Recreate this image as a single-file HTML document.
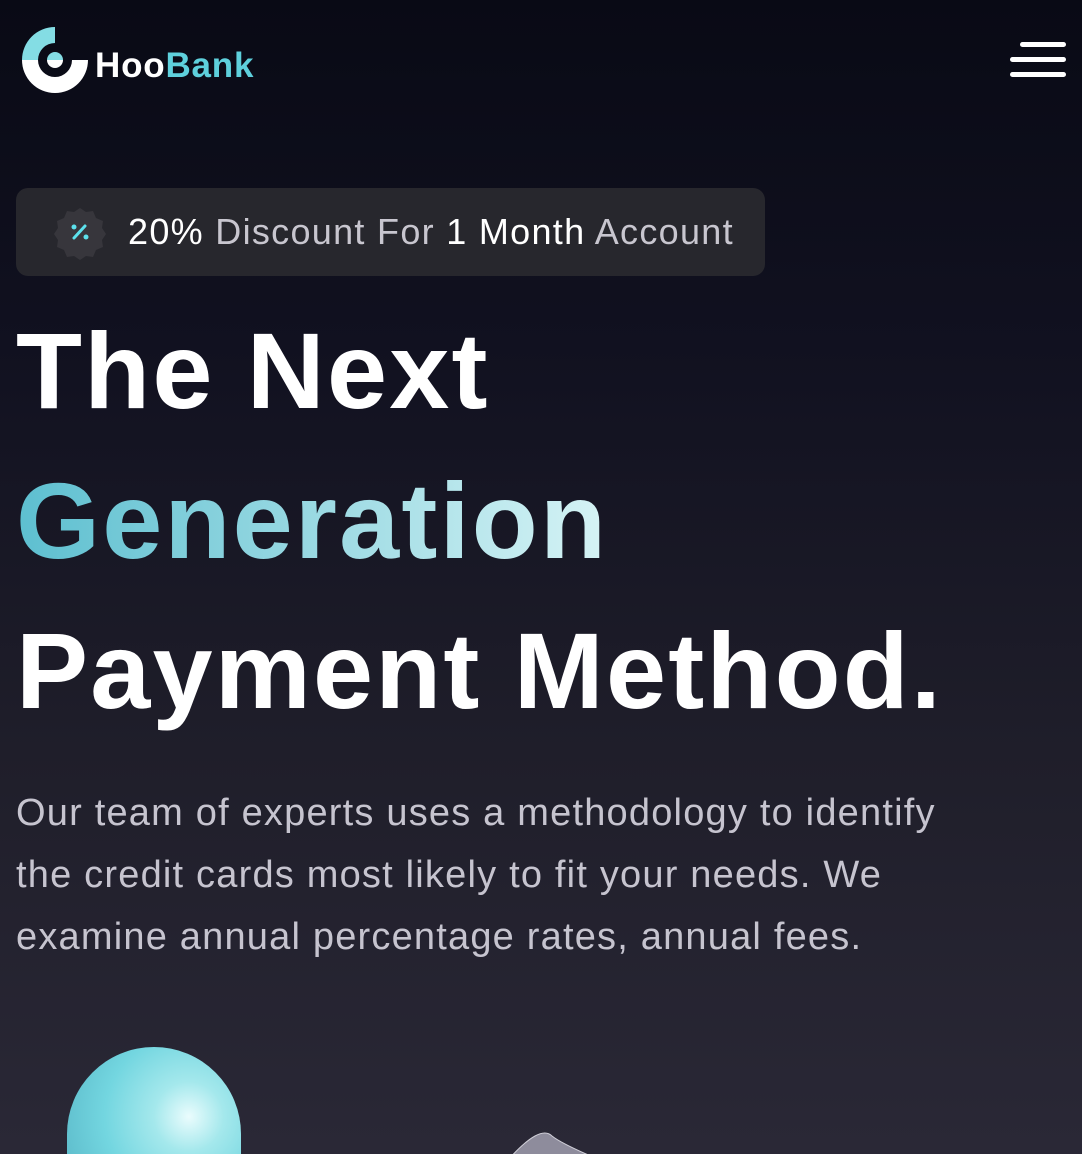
<!DOCTYPE html>
<html><head><style>
*{margin:0;padding:0;box-sizing:border-box}
html,body{width:1082px;height:1154px;overflow:hidden}
body{position:relative;font-family:"Liberation Sans",sans-serif;
background:linear-gradient(180deg,#090a15 0%,#111120 30%,#1f1e2a 65%,#2a2836 100%);}
.wrap{position:absolute;left:0;top:0;width:1082px;height:1154px;overflow:hidden}
.logo{position:absolute;left:22px;top:27px}
.brand{position:absolute;left:95px;top:46px;font-size:35px;font-weight:bold;color:#fff;letter-spacing:0.8px}
.brand span{color:#5ed0dc}
.menu{position:absolute;left:1010px;top:42px}
.menu div{height:5px;background:#fff;border-radius:3px;margin-bottom:10px}
.badge{position:absolute;left:16px;top:188px;width:749px;height:88px;background:#27272d;border-radius:12px}
.badge .t{position:absolute;left:112px;top:23px;font-size:36px;color:#fff;white-space:nowrap;letter-spacing:1.3px}
.badge .t i{font-style:normal;color:#c8c6cf}
h1{position:absolute;left:16px;font-size:108px;font-weight:bold;color:#fff;white-space:nowrap;letter-spacing:2.2px}
.g{background:linear-gradient(90deg,#5dbfd0,#d6f3f5);-webkit-background-clip:text;color:transparent}
p{position:absolute;left:16px;top:782px;width:960px;font-size:38px;line-height:62px;color:#c6c4cf;letter-spacing:1.2px}
.sphere{position:absolute;left:67px;top:1047px;width:174px;height:107px;border-radius:87px 87px 0 0;
background:radial-gradient(circle at 70% 65%,#eafcfd 0%,#a4e8ec 25%,#73d6e0 60%,#5ab8c8 100%)}
</style></head><body><div class="wrap">
<svg class="logo" width="68" height="66" viewBox="0 0 68 66">
<path d="M33 0 A33 33 0 0 0 0 33 L16 33 A17 17 0 0 1 33 16 Z" fill="#84dde4"/>
<path d="M0 33 A33 33 0 0 0 66 33 L50 33 A17 17 0 0 1 16 33 Z" fill="#fff"/>
<path d="M25 33 A8 8 0 0 1 41 33 Z" fill="#84dde4"/>
<path d="M25 33 A8 8 0 0 0 41 33 Z" fill="#fff"/>
</svg>
<div class="brand">Hoo<span>Bank</span></div>
<div class="menu"><div style="width:46px;margin-left:10px"></div><div style="width:56px"></div><div style="width:56px"></div></div>
<div class="badge">
<svg style="position:absolute;left:36px;top:16px" width="56" height="56" viewBox="0 0 56 56">
<path d="M28 4 l6 4 7-1 3 7 7 3-1 7 4 6-4 6 1 7-7 3-3 7-7-1-6 4-6-4-7 1-3-7-7-3 1-7-4-6 4-6-1-7 7-3 3-7 7 1z" fill="#37363c"/>
<circle cx="22" cy="23" r="2.5" fill="#5ce1ec"/><circle cx="34" cy="33" r="2.5" fill="#5ce1ec"/>
<line x1="22" y1="34" x2="33" y2="22" stroke="#5ce1ec" stroke-width="3" stroke-linecap="round"/>
</svg>
<div class="t">20% <i>Discount For</i> 1 Month <i>Account</i></div>
</div>
<h1 style="top:308px">The Next</h1>
<h1 style="top:458px"><span class="g">Generation</span></h1>
<h1 style="top:608px">Payment Method.</h1>
<p>Our team of experts uses a methodology to identify the credit cards most likely to fit your needs. We examine annual percentage rates, annual fees.</p>
<div class="sphere"></div>
<svg style="position:absolute;left:500px;top:1130px" width="110" height="24"><path d="M8 30 Q40 -6 52 6 Q62 14 100 30Z" fill="#8e8c9c" stroke="#d0cfd8" stroke-width="1"/></svg>
</div></body></html>
